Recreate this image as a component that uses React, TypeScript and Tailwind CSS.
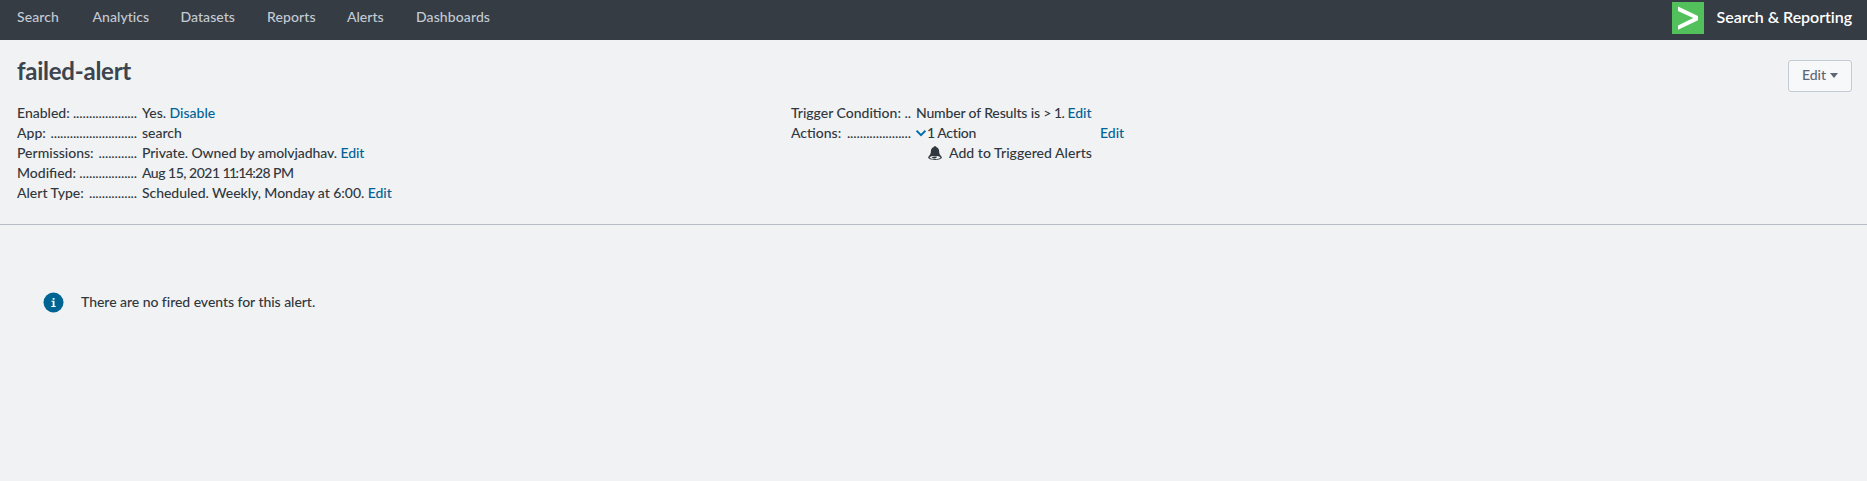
import type { ReactNode } from "react";

const navItems = [
  { label: "Search", cls: "w-[75.5px] tracking-[0.1px]" },
  { label: "Analytics", cls: "w-[88px] tracking-[0.05px]" },
  { label: "Datasets", cls: "w-[86.5px] tracking-[0.05px]" },
  { label: "Reports", cls: "w-[80px] tracking-[0.1px]" },
  { label: "Alerts", cls: "w-[69px]" },
  { label: "Dashboards", cls: "tracking-[0.1px]" },
];

function Link({ children }: { children: ReactNode }) {
  return <a className="cursor-pointer text-[#006297]">{children}</a>;
}

function Row({ label, dots, children }: { label: string; dots: number; children: ReactNode }) {
  return (
    <div className="flex h-5">
      <dt className="flex w-[120px] justify-between whitespace-nowrap">
        <span>{label}</span>
        <span className="tracking-[-0.100px]">{".".repeat(dots)}</span>
      </dt>
      <dd className="ml-[5px] whitespace-nowrap">{children}</dd>
    </div>
  );
}

function Bell() {
  return (
    <svg width="14" height="14" viewBox="0 0 14 14" className="shrink-0">
      <path
        d="M7 0.2c-.9 0-1.400.5-1.500 1.100C3.700 1.900 3 3.300 2.900 5c-.1 2.500-.6 3.600-1.900 4.900C.4 10.500.2 11 .2 11.500.2 12.900 3.200 13.900 7 13.900s6.800-1 6.800-2.400c0-.5-.2-1-.8-1.600-1.300-1.300-1.800-2.400-1.900-4.900-.1-1.700-.8-3.100-2.600-3.700C8.400.7 7.900.2 7 .2z"
        fill="#31373e"
      />
      <path d="M1.500 11.400C2.300 10.300 4.500 9.900 7 9.900s4.700.4 5.500 1.500c-.7 1-3 1.500-5.500 1.500s-4.800-.5-5.500-1.500z" fill="#f0f2f4" />
      <path d="M3.600 11.200c1-.6 2.200-.8 3.400-.8.500 0 1.300 0 1.900.2-.1 1.200-1 1.900-2.200 1.900-1.100 0-2.600-.4-3.100-1.300z" fill="#31373e" />
    </svg>
  );
}

export default function App() {
  return (
    <div className="h-[481px] w-full overflow-hidden bg-[#f0f2f4] font-[Lato,sans-serif] text-[14px] leading-5 font-medium text-[#31373e]">
      <header className="flex h-10 items-start justify-between bg-[#363c44] pr-[15px] pl-[17px]">
        <nav className="flex pt-[7px] text-[#c3cbd4]">
          {navItems.map((item) => (
            <a key={item.label} className={item.cls}>
              {item.label}
            </a>
          ))}
        </nav>
        <div className="flex pt-[2px]">
          <svg width="32" height="32" viewBox="0 0 32 32">
            <rect width="32" height="32" fill="#53c15b" />
            <path d="M6 4.600L26 14v4.200L6 27.800v-4.300L21.200 16.100 6 8.900z" fill="#fff" />
          </svg>
          <span className="ml-[13px] pt-[5px] text-[16px] font-semibold tracking-[-0.05px] text-white">
            Search &amp; Reporting
          </span>
        </div>
      </header>

      <section className="h-[185px] border-b border-[#b6bdc5] pr-[15px] pl-[17px]">
        <div className="flex h-[63px] items-start justify-between">
          <h1 className="pt-[17px] text-[24px] leading-[28px] font-bold tracking-[-0.25px] text-[#3c444d]">failed-alert</h1>
          <button className="mt-5 flex h-8 w-16 items-center justify-center gap-1 rounded-[3px] border border-[#c3cbd4] bg-[#f7f8fa] pb-[2px] text-[#5c6773]">
            Edit
            <svg width="8" height="5" viewBox="0 0 8 5">
              <path d="M0 0h8L4 5z" fill="#5c6773" />
            </svg>
          </button>
        </div>
        <div className="flex">
          <dl className="w-[774px]">
            <Row label="Enabled:" dots={20}>
              Yes. <Link>Disable</Link>
            </Row>
            <Row label="App:" dots={27}>
              search
            </Row>
            <Row label="Permissions:" dots={12}>
              <span className="tracking-[-0.08px]">
                Private. Owned by amolvjadhav. <Link>Edit</Link>
              </span>
            </Row>
            <Row label="Modified:" dots={18}>
              <span className="tracking-[-0.500px]">Aug 15, 2021 </span>
              <span className="tracking-[-1.700px]">11</span>
              <span className="tracking-[-0.600px]">:</span>
              <span className="tracking-[-1.200px]">14</span>
              <span className="tracking-[-0.600px]">:28 PM</span>
            </Row>
            <Row label="Alert Type:" dots={15}>
              <span className="tracking-[-0.040px]">
                Scheduled. Weekly, Monday at 6:00. <Link>Edit</Link>
              </span>
            </Row>
          </dl>
          <dl>
            <Row label="Trigger Condition:" dots={2}>
              <span className="tracking-[-0.150px]">Number of Results is </span>
              <span className="tracking-[-0.500px]">&gt; 1. </span>
              <Link>Edit</Link>
            </Row>
            <Row label="Actions:" dots={20}>
              <div className="flex">
                <svg width="10" height="20" viewBox="0 0 10 20" className="mr-[2px]">
                  <path d="M0.600 7.700L5 12.100l4.400-4.400" fill="none" stroke="#006eaa" strokeWidth="1.900" />
                </svg>
                <span className="-ml-px w-[173px] tracking-[-0.250px]">
                  <span className="tracking-[-0.700px]">1 </span>
                  Action
                </span>
                <Link>Edit</Link>
              </div>
            </Row>
            <div className="ml-[137px] flex h-5 items-center gap-[7px]">
              <Bell />
              <span className="tracking-[0.050px]">Add to Triggered Alerts</span>
            </div>
          </dl>
        </div>
      </section>

      <section className="flex items-center gap-[17px] pt-[67px] pl-[43px]">
        <svg width="21" height="21" viewBox="0 0 21 21">
          <circle cx="10.500" cy="10.500" r="10" fill="#006493" />
          <path d="M9.700 5.900h1.800v1.800H9.700zM8.400 8.700h3.100v5.400h1.200v1H8.300v-1h1.400V9.700H8.400z" fill="#fff" />
        </svg>
        <span className="pb-px tracking-[-0.040px]">There are no fired events for this alert.</span>
      </section>
    </div>
  );
}
